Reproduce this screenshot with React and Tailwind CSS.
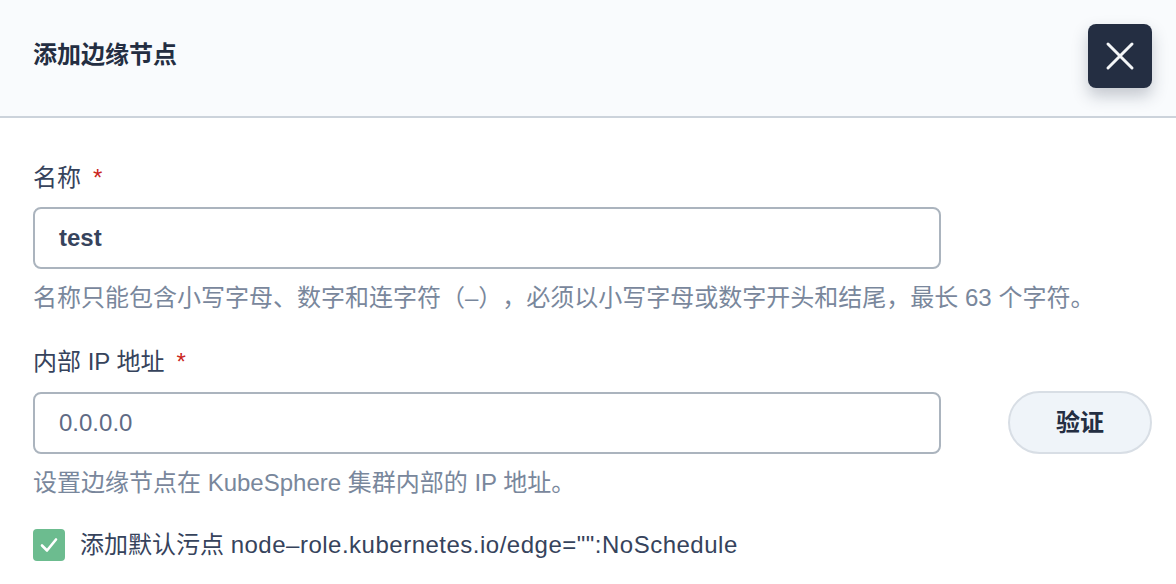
import React from "react";

const font = { fontFamily: '"Liberation Sans", "Noto Sans CJK SC", sans-serif' };

export default function App() {
  return (
    <div className="w-[1176px] h-[584px] bg-white overflow-hidden [text-spacing-trim:space-all]" style={font}>
      <div className="h-[118px] bg-[#f9fbfd] border-b-2 border-[#ccd3db] flex items-start justify-between pl-[33px] pr-[24px]">
        <div className="mt-[39px] text-[24px] leading-[32px] font-bold text-[#242e42]">添加边缘节点</div>
        <button className="mt-[24px] w-[64px] h-[64px] rounded-[8px] bg-[#242e42] flex items-center justify-center shadow-[0_8px_16px_rgba(36,46,66,0.25)]">
          <svg width="30" height="30" viewBox="0 0 30 30" fill="none" stroke="#f4f6f8" strokeWidth="3" strokeLinecap="round">
            <path d="M3 3 L27 27 M27 3 L3 27" />
          </svg>
        </button>
      </div>
      <div className="pl-[33px] pt-[44px]">
        <div className="text-[24px] leading-[32px] text-[#36435c] flex items-center">
          名称<span className="ml-[12px] text-[#ca2621]">*</span>
        </div>
        <div className="mt-[13px] w-[908px] h-[62px] border-2 border-[#abb4be] rounded-[8px] flex items-center pl-[24px] text-[24px] font-bold text-[#36435c]">
          test
        </div>
        <div className="mt-[13px] text-[24px] leading-[32px] text-[#79879c] whitespace-nowrap">
          名称只能包含小写字母、数字和连字符（–），必须以小写字母或数字开头和结尾，最长 63 个字符。
        </div>
        <div className="mt-[32px] text-[24px] leading-[32px] text-[#36435c] flex items-center">
          内部 IP 地址<span className="ml-[12px] text-[#ca2621]">*</span>
        </div>
        <div className="mt-[13px] flex items-center">
          <div className="w-[908px] h-[62px] border-2 border-[#abb4be] rounded-[8px] flex items-center pl-[24px] text-[24px] text-[#5f6b85]">
            0.0.0.0
          </div>
          <button className="ml-[67px] w-[144px] h-[63px] rounded-full bg-[#eff4f9] border-2 border-[#d8dee5] text-[24px] font-bold text-[#242e42]">
            验证
          </button>
        </div>
        <div className="mt-[13px] text-[24px] leading-[32px] text-[#79879c]">
          设置边缘节点在 KubeSphere 集群内部的 IP 地址。
        </div>
        <div className="mt-[30px] flex items-center h-[32px]">
          <div className="w-[32px] h-[32px] rounded-[4px] bg-[#6cbc8f] flex items-center justify-center">
            <svg width="20" height="20" viewBox="0 0 20 20" fill="none" stroke="white" strokeWidth="2.6" strokeLinecap="round" strokeLinejoin="round">
              <path d="M3 10.5 L8 15.5 L17 4.5" />
            </svg>
          </div>
          <div className="ml-[15px] text-[24px] leading-[32px] text-[#36435c] whitespace-nowrap">
            添加默认污点 <span className="tracking-[0.5px]">node–role.kubernetes.io/edge="":NoSchedule</span>
          </div>
        </div>
      </div>
    </div>
  );
}
